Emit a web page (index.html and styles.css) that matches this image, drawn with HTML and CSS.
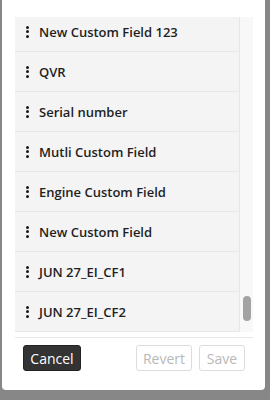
FILE: index.html
```html
<!DOCTYPE html>
<html>
<head>
<meta charset="utf-8">
<link rel="stylesheet" href="styles.css">
</head>
<body>
<div class="modal">
  <div class="list">
    <div class="rows">
      <div class="rows-inner">
        <div class="row"><span class="grip"><i></i><i></i><i></i></span><span class="label">New Custom Field 123</span></div>
        <div class="row"><span class="grip"><i></i><i></i><i></i></span><span class="label">QVR</span></div>
        <div class="row"><span class="grip"><i></i><i></i><i></i></span><span class="label">Serial number</span></div>
        <div class="row"><span class="grip"><i></i><i></i><i></i></span><span class="label">Mutli Custom Field</span></div>
        <div class="row"><span class="grip"><i></i><i></i><i></i></span><span class="label">Engine Custom Field</span></div>
        <div class="row"><span class="grip"><i></i><i></i><i></i></span><span class="label">New Custom Field</span></div>
        <div class="row"><span class="grip"><i></i><i></i><i></i></span><span class="label">JUN 27_EI_CF1</span></div>
        <div class="row"><span class="grip"><i></i><i></i><i></i></span><span class="label">JUN 27_EI_CF2</span></div>
      </div>
    </div>
    <div class="track"><div class="thumb"></div></div>
  </div>
  <div class="footer">
    <button class="btn btn-dark">Cancel</button>
    <div class="spacer"></div>
    <button class="btn btn-off btn-revert">Revert</button>
    <button class="btn btn-off btn-save">Save</button>
  </div>
</div>
</body>
</html>
```
FILE: styles.css
```css
html, body {
  margin: 0;
  padding: 0;
}
body {
  background: #878787;
  width: 270px;
  height: 400px;
  overflow: hidden;
  font-family: "Open Sans", "Liberation Sans", sans-serif;
}
.modal {
  margin-left: 2px;
  width: 263px;
  height: 390px;
  background: #ffffff;
  border-radius: 0 0 4px 4px;
  padding: 17px 12px 0 13px;
  box-sizing: border-box;
}
.list {
  display: flex;
  height: 315px;
  background: #f4f4f4;
}
.rows {
  flex: 1;
  overflow: hidden;
}
.rows-inner {
  margin-top: -5px;
}
.row {
  height: 40px;
  box-sizing: border-box;
  border-bottom: 1px solid #e7e7e7;
  display: flex;
  align-items: center;
  padding-left: 10px;
}
.grip {
  width: 4px;
  display: flex;
  flex-direction: column;
  align-items: center;
  gap: 1.5px;
  margin-right: 10px;
}
.grip i {
  display: block;
  width: 3px;
  height: 3px;
  border-radius: 50%;
  background: #1a1a1a;
}
.label {
  font-size: 13px;
  font-weight: 600;
  color: #1f1f1f;
}
.track {
  width: 14px;
  background: #f8f8f8;
  border-left: 1px solid #e6e6e6;
  display: flex;
  flex-direction: column;
  justify-content: flex-end;
  align-items: center;
  padding-bottom: 11px;
  box-sizing: border-box;
}
.thumb {
  width: 8px;
  height: 25px;
  border-radius: 4px;
  background: #a3a3a3;
}
.footer {
  margin-top: 5px;
  border-top: 1px solid #e8e8e8;
  padding: 7px 8px 0 8px;
  display: flex;
  gap: 7px;
}
.spacer {
  flex: 1;
}
.btn {
  height: 26px;
  font-family: "Open Sans", "Liberation Sans", sans-serif;
  font-size: 14px;
  border-radius: 3px;
  padding: 0;
  box-sizing: border-box;
}
.btn-dark {
  background: #333333;
  color: #ffffff;
  border: 1px solid #222222;
  width: 58px;
}
.btn-off {
  background: #ffffff;
  color: #b8b8b8;
  border: 1px solid #dddddd;
}
.btn-revert {
  width: 56px;
}
.btn-save {
  width: 46px;
}
```
